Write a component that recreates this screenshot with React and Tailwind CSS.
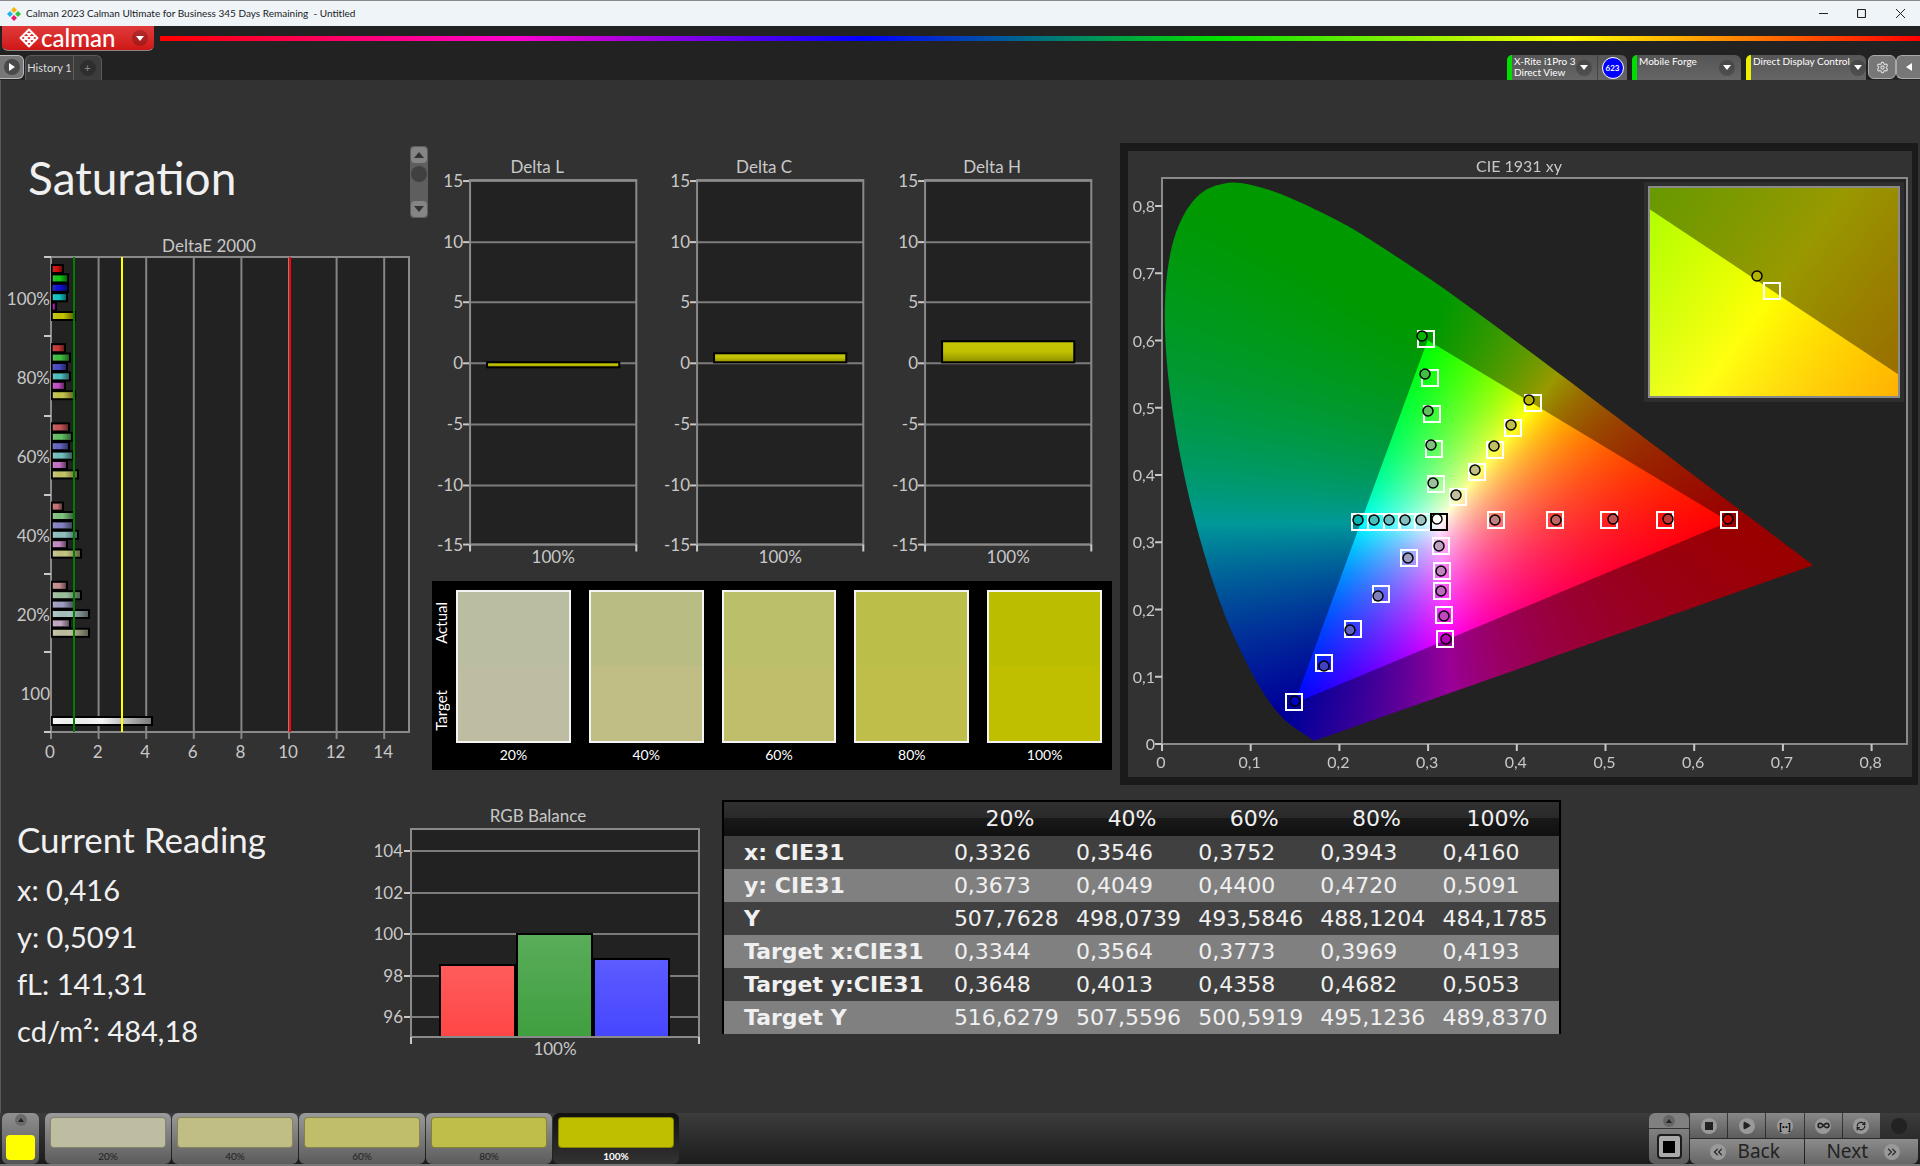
import { useLayoutEffect, useRef } from "react";
import { Play, Infinity as InfinityIcon, RefreshCw, Settings, ChevronsLeft, ChevronsRight } from "lucide-react";

const LEVELS = ["20%", "40%", "60%", "80%", "100%"];

const SWATCHES = [
  { label: "20%", actual: "#babda0", target: "#bfbda1" },
  { label: "40%", actual: "#babd83", target: "#c0be85" },
  { label: "60%", actual: "#bbbf69", target: "#c0be6b" },
  { label: "80%", actual: "#bbbf49", target: "#bfbe4a" },
  { label: "100%", actual: "#bbbd00", target: "#bfbf00" },
];

const DELTA_E = [
  { label: "100%", widths: [12, 17, 17, 16, 5, 24], colors: ["#d81010", "#12c812", "#1010d8", "#10c8c8", "#d010d0", "#c4c400"] },
  { label: "80%", widths: [14, 19, 16, 19, 14, 24], colors: ["#cf3a3a", "#40c040", "#4a4ac8", "#50c0c0", "#c850c8", "#c4c44c"] },
  { label: "60%", widths: [18, 21, 18, 22, 16, 27], colors: ["#c85656", "#62c062", "#6666c4", "#74c0c0", "#c870c8", "#c4c468"] },
  { label: "40%", widths: [12, 23, 22, 27, 16, 30], colors: ["#cc7474", "#80c480", "#8484c4", "#90c0c0", "#c88cc8", "#c4c484"] },
  { label: "20%", widths: [16, 30, 23, 38, 19, 38], colors: ["#c89090", "#9cc09c", "#a0a0c4", "#a8c0c0", "#c4a8c4", "#c0c0a0"] },
];

const DELTAS = [
  { title: "Delta L", top: 213, height: 5 },
  { title: "Delta C", top: 204, height: 9 },
  { title: "Delta H", top: 192, height: 21 },
];

const RGB_BARS = [
  { x: 70, y: 165, from: "#ff5c5c", to: "#ff4646" },
  { x: 147, y: 134, from: "#5aad5a", to: "#3f9f3f" },
  { x: 224, y: 159, from: "#5c5cff", to: "#4646ff" },
];

const READINGS = ["x: 0,416", "y: 0,5091", "fL: 141,31", "cd/m²: 484,18"];

const TABLE_ROWS = [
  ["x: CIE31", "0,3326", "0,3546", "0,3752", "0,3943", "0,4160"],
  ["y: CIE31", "0,3673", "0,4049", "0,4400", "0,4720", "0,5091"],
  ["Y", "507,7628", "498,0739", "493,5846", "488,1204", "484,1785"],
  ["Target x:CIE31", "0,3344", "0,3564", "0,3773", "0,3969", "0,4193"],
  ["Target y:CIE31", "0,3648", "0,4013", "0,4358", "0,4682", "0,5053"],
  ["Target Y", "516,6279", "507,5596", "500,5919", "495,1236", "489,8370"],
];

// Spectral locus of the CIE 1931 2° observer
const LOCUS = [
  [0.1741, 0.005], [0.1714, 0.0051], [0.1689, 0.0069], [0.1644, 0.0109], [0.1566, 0.0177],
  [0.144, 0.0297], [0.1355, 0.0399], [0.1241, 0.0578], [0.1096, 0.0868], [0.0913, 0.1327],
  [0.0687, 0.2007], [0.0454, 0.295], [0.0235, 0.4127], [0.0082, 0.5384], [0.0039, 0.6548],
  [0.0139, 0.7502], [0.0389, 0.812], [0.0743, 0.8338], [0.1142, 0.8262], [0.1547, 0.8059],
  [0.1929, 0.7816], [0.2296, 0.7543], [0.3016, 0.6923], [0.3731, 0.6245], [0.4441, 0.5547],
  [0.5125, 0.4866], [0.5752, 0.4242], [0.627, 0.3725], [0.6658, 0.334], [0.6915, 0.3083],
  [0.719, 0.2809], [0.7347, 0.2653],
];

const GAMUT = [[0.3, 0.6], [0.64, 0.33], [0.15, 0.06]];

// Marker centres in chart units, from 20% to 100%
const SERIES = [
  {
    targets: [[308, 333], [306, 298], [304, 263], [302, 227], [298, 188]],
    points: [[305, 332], [303, 294], [300, 260], [297, 223], [294, 185]],
    fills: ["#9cbf9c", "#80bf80", "#60bf60", "#40c040", "#00b400"],
  },
  {
    targets: [[330, 346], [349, 321], [367, 299], [385, 277], [405, 252]],
    points: [[328, 344], [347, 319], [366, 295], [383, 274], [401, 249]],
    fills: ["#bfbf9f", "#bfbf84", "#bfbf68", "#bfbf48", "#b8b400"],
  },
  {
    targets: [[295, 371], [279, 371], [264, 371], [248, 371], [232, 371]],
    points: [[293, 369], [277, 369], [261, 369], [246, 369], [230, 369]],
    fills: ["#a0bfbf", "#84bfbf", "#68bfbf", "#48bfbf", "#00b4b4"],
  },
  {
    targets: [[368, 369], [427, 369], [481, 369], [537, 369], [601, 369]],
    points: [[367, 369], [428, 369], [485, 368], [540, 368], [600, 368]],
    fills: ["#bf8080", "#bf6666", "#bf4e4e", "#c03838", "#c00000"],
  },
  {
    targets: [[313, 395], [314, 420], [314, 440], [316, 464], [317, 488]],
    points: [[311, 395], [313, 420], [313, 440], [316, 465], [318, 488]],
    fills: ["#bf9fbf", "#bf84bf", "#bf68bf", "#bf48bf", "#b400b4"],
  },
  {
    targets: [[281, 407], [253, 443], [225, 478], [196, 512], [166, 551]],
    points: [[280, 407], [250, 445], [222, 479], [196, 515], [167, 550]],
    fills: ["#9c9cbf", "#8080bf", "#6060bf", "#4040c0", "#0000c0"],
  },
];

const CIE_W = 784;
const CIE_H = 626;
const INSET = { x: 521, y: 36, w: 250, h: 210 };

const mainScale = {
  toPx: ([x, y]) => [33.5 + 887 * x, 592.7 - 672.5 * y],
  toXy: (px, py) => [(px - 33.5) / 887, (592.7 - py) / 672.5],
};

const insetScale = {
  toPx: ([x, y]) => [645 + (x - 0.4193) * 4700, 140 - (y - 0.5053) * 3930],
  toXy: (px, py) => [0.4193 + (px - 645) / 4700, 0.5053 - (py - 140) / 3930],
};

const xyToRgb = (x, y) => {
  const z = 1 - x - y;
  const r = Math.max(0, 3.2406 * x - 1.5372 * y - 0.4986 * z);
  const g = Math.max(0, -0.9689 * x + 1.8758 * y + 0.0415 * z);
  const b = Math.max(0, 0.0557 * x - 0.204 * y + 1.057 * z);
  const k = 255 / Math.max(r, g, b, 0.0001);
  return [r * k, g * k, b * k];
};

const tracePath = (ctx, points) => {
  points.forEach(([x, y], i) => (i ? ctx.lineTo(x, y) : ctx.moveTo(x, y)));
  ctx.closePath();
};

// Smooth closed outline through the locus samples
const traceLocus = (ctx) => {
  const p = LOCUS.map(mainScale.toPx);
  ctx.moveTo(p[0][0], p[0][1]);
  for (let i = 0; i < p.length - 1; i++) {
    const a = p[Math.max(i - 1, 0)];
    const b = p[i];
    const c = p[i + 1];
    const d = p[Math.min(i + 2, p.length - 1)];
    ctx.bezierCurveTo(
      b[0] + (c[0] - a[0]) / 6, b[1] + (c[1] - a[1]) / 6,
      c[0] - (d[0] - b[0]) / 6, c[1] - (d[1] - b[1]) / 6,
      c[0], c[1]
    );
  }
  ctx.closePath();
};

const gradientLayer = (scale, trace) => {
  const layer = document.createElement("canvas");
  layer.width = CIE_W;
  layer.height = CIE_H;
  const ctx = layer.getContext("2d");
  const image = ctx.createImageData(CIE_W, CIE_H);
  for (let py = 0; py < CIE_H; py++) {
    for (let px = 0; px < CIE_W; px++) {
      const [x, y] = scale.toXy(px, py);
      const [r, g, b] = xyToRgb(x, y);
      const i = (py * CIE_W + px) * 4;
      image.data[i] = r;
      image.data[i + 1] = g;
      image.data[i + 2] = b;
      image.data[i + 3] = 255;
    }
  }
  ctx.putImageData(image, 0, 0);

  // darken everything outside the gamut triangle
  ctx.beginPath();
  ctx.rect(0, 0, CIE_W, CIE_H);
  tracePath(ctx, GAMUT.map(scale.toPx));
  ctx.fillStyle = "rgba(0,0,0,0.4)";
  ctx.fill("evenodd");

  ctx.globalCompositeOperation = "destination-in";
  ctx.fillStyle = "#000";
  ctx.beginPath();
  trace(ctx);
  ctx.fill();
  return layer;
};

const Caret = () => (
  <span className="flex h-4 w-4 shrink-0 items-center justify-center rounded-full bg-black/20">
    <svg width="8" height="5" viewBox="0 0 8 5">
      <path d="M0 0h8L4 5z" fill="#fff" />
    </svg>
  </span>
);

const TitleBar = () => (
  <div className="flex h-[26px] items-center border-t border-[#8a8a8a] bg-[#eff4f9] pl-[7px] text-[#1a1a1a]">
    <svg width="14" height="14" viewBox="0 0 14 14">
      <path d="M7 0l3 3-3 3-3-3z" fill="#f5b50a" />
      <path d="M3 4l3 3-3 3-3-3z" fill="#1fb5e8" />
      <path d="M11 4l3 3-3 3-3-3z" fill="#2fc33a" />
      <path d="M7 8l3 3-3 3-3-3z" fill="#e8186a" />
    </svg>
    <span className="ml-[5px] text-[10px] whitespace-pre">Calman 2023 Calman Ultimate for Business 345 Days Remaining  - Untitled</span>
    <div className="ml-auto flex">
      <button aria-label="Minimize" className="flex h-[25px] w-[38px] items-center justify-center">
        <svg width="9" height="9" viewBox="0 0 9 9"><path d="M0 4.500h9" stroke="#222" /></svg>
      </button>
      <button aria-label="Maximize" className="flex h-[25px] w-[38px] items-center justify-center">
        <svg width="9" height="9" viewBox="0 0 9 9"><rect x="0.500" y="0.500" width="8" height="8" rx="1" fill="none" stroke="#222" strokeWidth="1.200" /></svg>
      </button>
      <button aria-label="Close" className="flex h-[25px] w-[40px] items-center justify-center">
        <svg width="9" height="9" viewBox="0 0 9 9"><path d="M0 0l9 9M9 0L0 9" stroke="#222" /></svg>
      </button>
    </div>
  </div>
);

const Device = ({ lines, strip, width, children }) => (
  <div className={`flex h-[25px] rounded-t-md bg-linear-to-b from-[#555] to-[#666] ${width}`}>
    <span className={`w-[5px] shrink-0 rounded-tl-md ${strip}`} />
    <button className="flex min-w-0 flex-1 items-center justify-between pr-[6px] pl-[2px] text-left text-[10px] leading-[11px] whitespace-nowrap text-white">
      <span className="self-start pt-px">
        {lines.map((line) => (
          <span key={line} className="block">{line}</span>
        ))}
      </span>
      <Caret />
    </button>
    {children}
  </div>
);

const Header = () => (
  <header className="bg-[#222]">
    <div className="flex h-[29px] items-start pl-[2px]">
      <button className="flex h-[25px] w-[152px] items-center rounded-b-md border-b border-[#888] bg-linear-to-b from-[#e03a3a] to-[#cf1515] pl-[17px] text-white">
        <svg width="20" height="20" viewBox="0 0 20 20" fill="none" stroke="#fff" strokeWidth="2">
          <path d="M10 1.500l8.500 8.500-8.500 8.500L1.500 10zM7.200 4.300l8.500 8.500M4.300 7.200l8.500 8.500M12.800 4.300l-8.500 8.500M15.700 7.200l-8.500 8.500" strokeLinejoin="round" />
        </svg>
        <span className="ml-[2px] text-[24px] leading-[20px] font-medium">calman</span>
        <span className="ml-auto pr-[6px]"><Caret /></span>
      </button>
      <div className="mt-[10px] ml-[6px] h-[5px] flex-1 bg-[linear-gradient(90deg,#f00,#f0c_20%,#00f_40%,#00e000_60%,#ff0_80%,#f00)]" />
    </div>
    <div className="flex items-end">
      <button aria-label="Show panel" className="mb-px flex h-6 w-6 items-center justify-center rounded-r-md border border-l-0 border-[#bbb] bg-[#777]">
        <span className="flex h-4 w-4 items-center justify-center rounded-full bg-[#4a4a4a]">
          <svg width="6" height="8" viewBox="0 0 6 8"><path d="M0 0l6 4-6 4z" fill="#fff" /></svg>
        </span>
      </button>
      <div className="ml-px flex h-[25px] rounded-t-md border border-b-0 border-[#5a5a5a] bg-[#3c3c3c] text-[11px] text-[#ddd]">
        <button className="w-12 border-r border-[#5a5a5a] whitespace-nowrap">History 1</button>
        <button className="flex w-[27px] items-center justify-center">
          <span className="h-4 w-4 rounded-full bg-[#2e2e2e] text-[11px] leading-4 text-[#888]">+</span>
        </button>
      </div>
      <div className="ml-auto flex items-end gap-[5px]">
        <Device lines={["X-Rite i1Pro 3", "Direct View"]} strip="bg-[#00dd00]" width="w-[120px]">
          <span className="flex w-[30px] items-center justify-center border-l border-[#444]">
            <span className="flex h-[22px] w-[22px] items-center justify-center rounded-full border border-white bg-[#0000ff] text-[8px] font-bold text-white">623</span>
          </span>
        </Device>
        <Device lines={["Mobile Forge"]} strip="bg-[#00dd00]" width="w-[109px]" />
        <Device lines={["Direct Display Control"]} strip="bg-[#eeee00]" width="w-[120px]" />
      </div>
      <div className="mb-px ml-[2px] flex">
        <button aria-label="Settings" className="flex h-6 w-7 items-center justify-center rounded-md border border-[#aaa] bg-[#777] text-[#ddd]">
          <Settings size={13} />
        </button>
        <button aria-label="Collapse" className="flex h-6 w-6 items-center justify-center rounded-l-md border border-r-0 border-[#aaa] bg-[#777]">
          <svg width="6" height="8" viewBox="0 0 6 8"><path d="M6 0L0 4l6 4z" fill="#fff" /></svg>
        </button>
      </div>
    </div>
  </header>
);

const DeltaEChart = () => (
  <svg viewBox="0 0 430 534" className="block h-auto w-full text-[17px]" fill="#c8c8c8">
    <defs>
      <linearGradient id="barShade">
        <stop offset="0" stopColor="#fff" stopOpacity="0.15" />
        <stop offset="0.500" stopColor="#000" stopOpacity="0" />
        <stop offset="1" stopColor="#000" stopOpacity="0.500" />
      </linearGradient>
    </defs>
    <text x="209" y="17" textAnchor="middle">DeltaE 2000</text>
    <rect x="51" y="22" width="358" height="475" fill="#222" />
    {[0, 2, 4, 6, 8, 10, 12, 14].map((v) => (
      <g key={v}>
        <path d={`M${51 + v * 23.8} 22V504`} stroke="#858585" strokeWidth="2" />
        <text x={50 + v * 23.8} y="523" textAnchor="middle">{v}</text>
      </g>
    ))}
    <rect x="51" y="22" width="358" height="475" fill="none" stroke="#8a8a8a" strokeWidth="2" />
    {[22, 101, 181, 260, 339, 417, 497].map((y) => (
      <path key={y} d={`M44 ${y}h7`} stroke="#c8c8c8" strokeWidth="2" />
    ))}
    {DELTA_E.map((group, g) => (
      <g key={group.label}>
        <text x="50" y={70 + g * 79} textAnchor="end">{group.label}</text>
        {group.widths.map((w, i) => {
          const y = 30 + g * 79.2 + i * 9.4;
          return (
            <g key={i}>
              <rect x="52" y={y} width={w - 1} height="8" fill={group.colors[i]} stroke="#000" strokeWidth="2" />
              <rect x="52" y={y + 1} width={w - 2} height="6" fill="url(#barShade)" />
            </g>
          );
        })}
      </g>
    ))}
    <text x="50" y="465" textAnchor="end">100</text>
    <rect x="52" y="482" width="100" height="8" fill="#f4f4f4" stroke="#000" strokeWidth="2" />
    <rect x="52" y="483" width="99" height="6" fill="url(#barShade)" />
    <path d="M74 22V497" stroke="#008000" strokeWidth="2" />
    <path d="M122 22V497" stroke="#ff0" strokeWidth="2" />
    <path d="M290 22V497" stroke="#f00" strokeWidth="2" />
  </svg>
);

const DeltaChart = ({ title, top, height }) => (
  <svg viewBox="0 0 227 425" className="block h-auto w-full text-[17px]" fill="#c8c8c8">
    <defs>
      <linearGradient id="yellowBar" x2="0" y2="1">
        <stop offset="0" stopColor="#c8c80c" />
        <stop offset="0.500" stopColor="#c0c000" />
        <stop offset="1" stopColor="#8c8c00" />
      </linearGradient>
    </defs>
    <text x="107" y="24" textAnchor="middle">{title}</text>
    <rect x="40" y="31" width="166" height="364" fill="#222" />
    {[[15, 32], [10, 93], [5, 153], [0, 214], [-5, 275], [-10, 336], [-15, 395]].map(([v, y]) => (
      <g key={v}>
        <path d={`M33 ${y}h7`} stroke="#c8c8c8" strokeWidth="2" />
        <path d={`M40 ${y}h166`} stroke="#7c7c7c" strokeWidth="2" />
        <text x="33" y={y + 6} textAnchor="end">{v}</text>
      </g>
    ))}
    <rect x="40" y="31" width="166" height="364" fill="none" stroke="#8a8a8a" strokeWidth="2" />
    <path d="M40 395v7M206 395v7" stroke="#c8c8c8" strokeWidth="2" />
    <rect x="57" y={top} width="132" height={height} fill="url(#yellowBar)" stroke="#000" strokeWidth="2" />
    <text x="123" y="413" textAnchor="middle">100%</text>
  </svg>
);

const SwatchPanel = () => (
  <div className="ml-[2px] flex gap-[8px] bg-black pt-[9px] pr-[10px] pb-[7px] pl-[3px] text-[14px] text-white">
    <div className="flex h-[153px] w-[13px] flex-col justify-between py-[12px] text-[15px] leading-[13px]">
      <span className="rotate-180 text-center [writing-mode:vertical-rl]">Actual</span>
      <span className="rotate-180 text-center [writing-mode:vertical-rl]">Target</span>
    </div>
    <div className="grid flex-1 grid-cols-5 gap-[18px]">
      {SWATCHES.map((s) => (
        <div key={s.label} className="text-center">
          <div className="h-[153px] border-2 border-[#f4f4f4]">
            <div className="h-1/2" style={{ backgroundColor: s.actual }} />
            <div className="h-1/2" style={{ backgroundColor: s.target }} />
          </div>
          <div className="mt-[4px] leading-[16px]">{s.label}</div>
        </div>
      ))}
    </div>
  </div>
);

const CieChart = () => {
  const canvasRef = useRef(null);

  useLayoutEffect(() => {
    const ctx = canvasRef.current.getContext("2d");
    ctx.clearRect(0, 0, CIE_W, CIE_H);
    ctx.fillStyle = "#222";
    ctx.fillRect(34, 27, 745, 566);
    ctx.drawImage(gradientLayer(mainScale, traceLocus), 0, 0);
    ctx.fillStyle = "#2e2e2e";
    ctx.fillRect(INSET.x - 5, INSET.y - 5, INSET.w + 10, INSET.h + 10);
    ctx.drawImage(
      gradientLayer(insetScale, (c) => c.rect(INSET.x, INSET.y, INSET.w, INSET.h)),
      0,
      0
    );
  }, []);

  return (
    <div className="relative border-8 border-r-[6px] border-[#1a1a1a] bg-[#323232]">
      <canvas ref={canvasRef} width={CIE_W} height={CIE_H} className="block h-auto w-full" />
      <svg viewBox={`0 0 ${CIE_W} ${CIE_H}`} className="absolute inset-0 h-full w-full text-[16px]" fill="#c8c8c8">
        <text x="391" y="21" textAnchor="middle">CIE 1931 xy</text>
        <rect x="34" y="27" width="745" height="566" fill="none" stroke="#8a8a8a" strokeWidth="2" />
        {[0, 1, 2, 3, 4, 5, 6, 7, 8].map((n) => (
          <g key={n}>
            <path d={`M${34 + n * 88.7} 593v7M27 ${593 - n * 67.25}h7`} stroke="#c8c8c8" strokeWidth="2" />
            <text x={33 + n * 88.7} y="617" textAnchor="middle">{n ? `0,${n}` : "0"}</text>
            <text x="27" y={599 - n * 67.25} textAnchor="end">{n ? `0,${n}` : "0"}</text>
          </g>
        ))}
        <g fill="none" stroke="#fff" strokeWidth="2">
          {SERIES.map((s) => s.targets.map(([x, y]) => (
            <rect key={`${x}-${y}`} x={x - 8} y={y - 8} width="16" height="16" />
          )))}
        </g>
        <rect x="303" y="363" width="16" height="16" fill="none" stroke="#000" strokeWidth="2" />
        <g stroke="#000" strokeWidth="1.500">
          {SERIES.map((s) => s.points.map(([x, y], i) => (
            <circle key={`${x}-${y}`} cx={x} cy={y} r="5" fill={s.fills[i]} />
          )))}
          <circle cx="309" cy="368" r="5" fill="#fff" />
        </g>
        <rect x={INSET.x} y={INSET.y} width={INSET.w} height={INSET.h} fill="none" stroke="#8a8a8a" strokeWidth="2" />
        <rect x="636" y="132" width="16" height="16" fill="none" stroke="#fff" strokeWidth="2" />
        <circle cx="629" cy="125" r="5" fill="#b4b400" stroke="#000" strokeWidth="1.500" />
      </svg>
    </div>
  );
};

const RgbChart = () => (
  <svg viewBox="0 0 352 270" className="block h-auto w-full text-[17px]" fill="#c8c8c8">
    <text x="168" y="22" textAnchor="middle">RGB Balance</text>
    <rect x="41" y="29" width="288" height="208" fill="#222" />
    {[[104, 51], [102, 93], [100, 134], [98, 176], [96, 217]].map(([v, y]) => (
      <g key={v}>
        <path d={`M34 ${y}h7`} stroke="#c8c8c8" strokeWidth="2" />
        <path d={`M41 ${y}h288`} stroke="#7c7c7c" strokeWidth="2" />
        <text x="33" y={y + 6} textAnchor="end">{v}</text>
      </g>
    ))}
    {RGB_BARS.map((bar) => (
      <g key={bar.x}>
        <defs>
          <linearGradient id={`rgb${bar.x}`} x2="0" y2="1">
            <stop offset="0" stopColor={bar.from} />
            <stop offset="1" stopColor={bar.to} />
          </linearGradient>
        </defs>
        <rect x={bar.x} y={bar.y} width="75" height={237 - bar.y} fill={`url(#rgb${bar.x})`} stroke="#000" strokeWidth="2" />
      </g>
    ))}
    <rect x="41" y="29" width="288" height="208" fill="none" stroke="#8a8a8a" strokeWidth="2" />
    <path d="M41 237v7M329 237v7" stroke="#c8c8c8" strokeWidth="2" />
    <text x="185" y="255" textAnchor="middle">100%</text>
  </svg>
);

const DataTable = () => (
  <table className="w-[70%] table-fixed border-collapse border-2 border-b-0 border-black font-['DejaVu_Sans',sans-serif] text-[22px] leading-6 text-[#f0f0f0]">
    <thead>
      <tr className="h-[35px] bg-[linear-gradient(180deg,#303030,#292929_50%,#181818_50%,#101010)]">
        <th className="w-[27%]" />
        {LEVELS.map((level) => (
          <th key={level} scope="col" className="font-normal">{level}</th>
        ))}
      </tr>
    </thead>
    <tbody>
      {TABLE_ROWS.map(([label, ...values]) => (
        <tr key={label} className="h-[33px] odd:bg-[#404040] even:bg-[#808080]">
          <th scope="row" className="pl-[20px] text-left font-bold whitespace-nowrap">{label}</th>
          {values.map((value) => (
            <td key={value} className="pl-[5px]">{value}</td>
          ))}
        </tr>
      ))}
    </tbody>
  </table>
);

const RoundIcon = ({ children }) => (
  <span className="flex h-4 w-4 items-center justify-center rounded-full bg-[#999] text-[#222]">{children}</span>
);

const TRANSPORT = [
  { name: "Stop", icon: <span className="h-2 w-2 bg-[#222]" /> },
  { name: "Play", icon: <Play size={9} fill="currentColor" /> },
  { name: "Step", icon: <span className="text-[10px] leading-none font-black text-black">[··]</span> },
  { name: "Loop", icon: <InfinityIcon size={13} strokeWidth={3} /> },
  { name: "Refresh", icon: <RefreshCw size={10} strokeWidth={3} /> },
];

const Footer = () => (
  <footer className="flex h-[53px] items-start border-b-2 border-[#777] bg-linear-to-b from-[#3c3c3c] to-[#1c1c1c] pl-[2px]">
    <button aria-label="Current color" className="flex h-[51px] w-[37px] flex-col items-center rounded-md bg-linear-to-b from-[#909090] to-[#555]">
      <span className="mt-px flex h-3 w-3 items-center justify-center rounded-full bg-[#6a6a6a]">
        <svg width="6" height="4" viewBox="0 0 6 4"><path d="M3 0l3 4H0z" fill="#222" /></svg>
      </span>
      <span className="mt-[9px] h-[25px] w-[29px] rounded-sm bg-[#ffff00]" />
    </button>
    <div className="ml-[6px] flex gap-px">
      {SWATCHES.map((s, i) => (
        <button
          key={s.label}
          className={`flex h-[51px] w-[126px] flex-col rounded-md px-[5px] pt-[4px] text-center text-[10px] ${
            i === 4 ? "bg-linear-to-b from-[#111] to-[#333] font-bold text-white" : "bg-linear-to-b from-[#9a9a9a] to-[#5c5c5c] text-[#222]"
          }`}
        >
          <span className="h-[31px] w-full rounded-sm border border-black/30" style={{ backgroundColor: s.target }} />
          <span className="w-full leading-4">{s.label}</span>
        </button>
      ))}
    </div>
    <div className="ml-auto flex gap-px pr-[2px]">
      <div className="flex w-10 flex-col gap-px">
        <button aria-label="Expand" className="flex h-[15px] items-center justify-center rounded-t-md bg-[#808080]">
          <span className="flex h-3 w-3 items-center justify-center rounded-full bg-[#666]">
            <svg width="6" height="4" viewBox="0 0 6 4"><path d="M3 0l3 4H0z" fill="#222" /></svg>
          </span>
        </button>
        <button aria-label="Pattern" className="flex h-[35px] items-center justify-center rounded-b-md bg-linear-to-b from-[#808080] to-[#5c5c5c]">
          <span className="flex h-[25px] w-[25px] items-center justify-center rounded-sm border-2 border-[#1c1c1c] bg-[#aaa]">
            <span className="h-3 w-3 bg-black" />
          </span>
        </button>
      </div>
      <div className="w-[228px]">
        <div className="grid grid-cols-6 gap-px">
          {TRANSPORT.map((t) => (
            <button key={t.name} aria-label={t.name} className="flex h-[25px] items-center justify-center bg-linear-to-b from-[#888] to-[#5c5c5c]">
              <RoundIcon>{t.icon}</RoundIcon>
            </button>
          ))}
          <span className="flex h-[25px] items-center justify-center">
            <span className="h-4 w-4 rounded-full bg-[#222]" />
          </span>
        </div>
        <div className="mt-px grid grid-cols-2 gap-px font-['Noto_Sans',sans-serif] text-[19px] leading-[25px] text-[#222]">
          <button className="flex h-[25px] items-center justify-center gap-3 rounded-bl-md bg-linear-to-b from-[#8c8c8c] to-[#666] pr-1">
            <RoundIcon><ChevronsLeft size={14} /></RoundIcon>
            Back
          </button>
          <button className="flex h-[25px] items-center justify-center gap-4 rounded-br-md bg-linear-to-b from-[#8c8c8c] to-[#666] pl-1">
            Next
            <RoundIcon><ChevronsRight size={14} /></RoundIcon>
          </button>
        </div>
      </div>
    </div>
  </footer>
);

const App = () => {
  return (
    <div className="flex min-h-screen flex-col bg-[#323232] font-[Lato,sans-serif]">
      <TitleBar />
      <Header />
      <main className="flex-1 pt-[63px] shadow-[inset_1px_0_0_#5a5a5a]">
        <div className="grid grid-cols-[430fr_690fr_800fr]">
          <section className="pt-[3px]">
            <div className="flex items-start justify-between pr-[2px] pl-[28px]">
              <h1 className="text-[46px] leading-[63px] text-[#f0f0f0]">Saturation</h1>
              <div className="flex h-[72px] w-[18px] flex-col items-center rounded-sm bg-[#5e5e5e] p-px">
                <button aria-label="Scroll up" className="flex h-4 w-4 items-center justify-center rounded-sm bg-[#858585]">
                  <svg width="10" height="6" viewBox="0 0 10 6"><path d="M5 0l5 6H0z" fill="#333" /></svg>
                </button>
                <span className="mt-[3px] h-4 w-4 rounded-full bg-[#404040]" />
                <button aria-label="Scroll down" className="mt-auto flex h-4 w-4 items-center justify-center rounded-sm bg-[#858585]">
                  <svg width="10" height="6" viewBox="0 0 10 6"><path d="M0 0h10L5 6z" fill="#333" /></svg>
                </button>
              </div>
            </div>
            <div className="mt-[17px]">
              <DeltaEChart />
            </div>
          </section>
          <section className="pt-[6px] pr-[8px]">
            <div className="grid grid-cols-3">
              {DELTAS.map((d) => (
                <DeltaChart key={d.title} {...d} />
              ))}
            </div>
            <div className="mt-[6px]">
              <SwatchPanel />
            </div>
          </section>
          <section className="pr-[2px]">
            <CieChart />
          </section>
        </div>
        <div className="mt-[15px] grid grid-cols-[370fr_352fr_1198fr]">
          <section className="pt-[17px] pl-[17px] text-[#f0f0f0]">
            <h2 className="text-[35px] leading-[44px]">Current Reading</h2>
            <div className="mt-[5px] text-[29px] leading-[47px]">
              {READINGS.map((line) => (
                <p key={line}>{line}</p>
              ))}
            </div>
          </section>
          <RgbChart />
          <div>
            <DataTable />
          </div>
        </div>
      </main>
      <Footer />
    </div>
  );
};

export default App;
